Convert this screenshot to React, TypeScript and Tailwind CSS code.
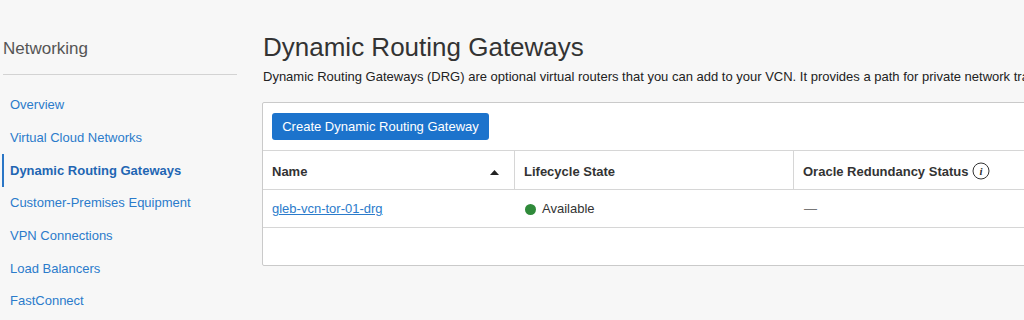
const NAV_ITEMS = [
  { label: "Overview", active: false },
  { label: "Virtual Cloud Networks", active: false },
  { label: "Dynamic Routing Gateways", active: true },
  { label: "Customer-Premises Equipment", active: false },
  { label: "VPN Connections", active: false },
  { label: "Load Balancers", active: false },
  { label: "FastConnect", active: false },
];

function InfoIcon() {
  return (
    <svg width="18" height="18" viewBox="0 0 18 18" className="shrink-0">
      <circle cx="9" cy="9" r="8" fill="none" stroke="#333" strokeWidth="1" />
      <text
        x="9"
        y="13"
        textAnchor="middle"
        fontSize="11"
        fontStyle="italic"
        fontFamily="'Liberation Serif', serif"
        fill="#333"
      >
        i
      </text>
    </svg>
  );
}

export default function App() {
  return (
    <div className="flex h-[320px] w-[1024px] overflow-hidden bg-[#f7f7f7] font-['Liberation_Sans',Arial,sans-serif]">
      {/* sidebar */}
      <div className="w-[237px] shrink-0 pt-[37px]">
        <h2 className="pl-[3px] text-[17px] leading-[24px] font-light text-[#555]">
          Networking
        </h2>
        <div className="mt-[13px] ml-[3px] h-px bg-[#d3d3d3]" />
        <nav className="mt-[13.6px] pl-[2px]">
          {NAV_ITEMS.map((item) => (
            <div
              key={item.label}
              className={`flex h-[32.7px] items-center pl-[6px] text-[13px] border-l-2 ${
                item.active
                  ? "border-[#2a76c6] font-bold text-[#1f66b3]"
                  : "border-transparent text-[#2b7bcb]"
              }`}
            >
              {item.label}
            </div>
          ))}
        </nav>
      </div>

      {/* main */}
      <div className="ml-[25px] shrink-0 pt-[31px]">
        <h1 className="pl-[1px] text-[26px] leading-[32px] text-[#333]">
          Dynamic Routing Gateways
        </h1>
        <p className="mt-[5px] pl-[1px] text-[13px] leading-[18px] whitespace-nowrap text-[#222]">
          Dynamic Routing Gateways (DRG) are optional virtual routers that you can add to your VCN. It provides a path for private network traffic
        </p>

        <div className="mt-[16px] w-[800px] rounded-[2px] border border-[#cacaca] bg-white">
          <div className="pt-[10px] pl-[9px] pb-[10px]">
            <button className="h-[27px] w-[217px] rounded-[3px] bg-[#1c73cc] text-[13px] text-white">
              Create Dynamic Routing Gateway
            </button>
          </div>

          <div className="grid grid-cols-[252px_279px_1fr] text-[13px] text-[#333]">
            <div className="flex h-[40px] items-center justify-between border-t border-b border-r border-[#d6d6d6] pt-[4px] pl-[9px] pr-[15px] font-bold">
              <span>Name</span>
              <svg width="9" height="5" viewBox="0 0 9 5">
                <path d="M0 5 L4.5 0 L9 5 Z" fill="#222" />
              </svg>
            </div>
            <div className="flex h-[40px] items-center border-t border-b border-r border-[#d6d6d6] pt-[4px] pl-[9px] font-bold">
              Lifecycle State
            </div>
            <div className="flex h-[40px] items-center gap-[4px] border-t border-b border-[#d6d6d6] pt-[2px] pl-[9px] font-bold">
              <span className="pt-[2px]">Oracle Redundancy Status</span>
              <InfoIcon />
            </div>

            <div className="flex h-[38px] items-center border-b border-[#d6d6d6] pt-[1px] pl-[9px]">
              <a href="#" className="text-[#2b7bcb] underline">
                gleb-vcn-tor-01-drg
              </a>
            </div>
            <div className="flex h-[38px] items-center gap-[6px] border-b border-[#d6d6d6] pt-[1px] pl-[10px]">
              <span className="h-[11px] w-[11px] rounded-full bg-[#2f8a3a]" />
              <span>Available</span>
            </div>
            <div className="flex h-[38px] items-center border-b border-[#d6d6d6] pl-[10px] text-[#777]">
              —
            </div>
          </div>
          <div className="h-[37px]" />
        </div>
      </div>
    </div>
  );
}
